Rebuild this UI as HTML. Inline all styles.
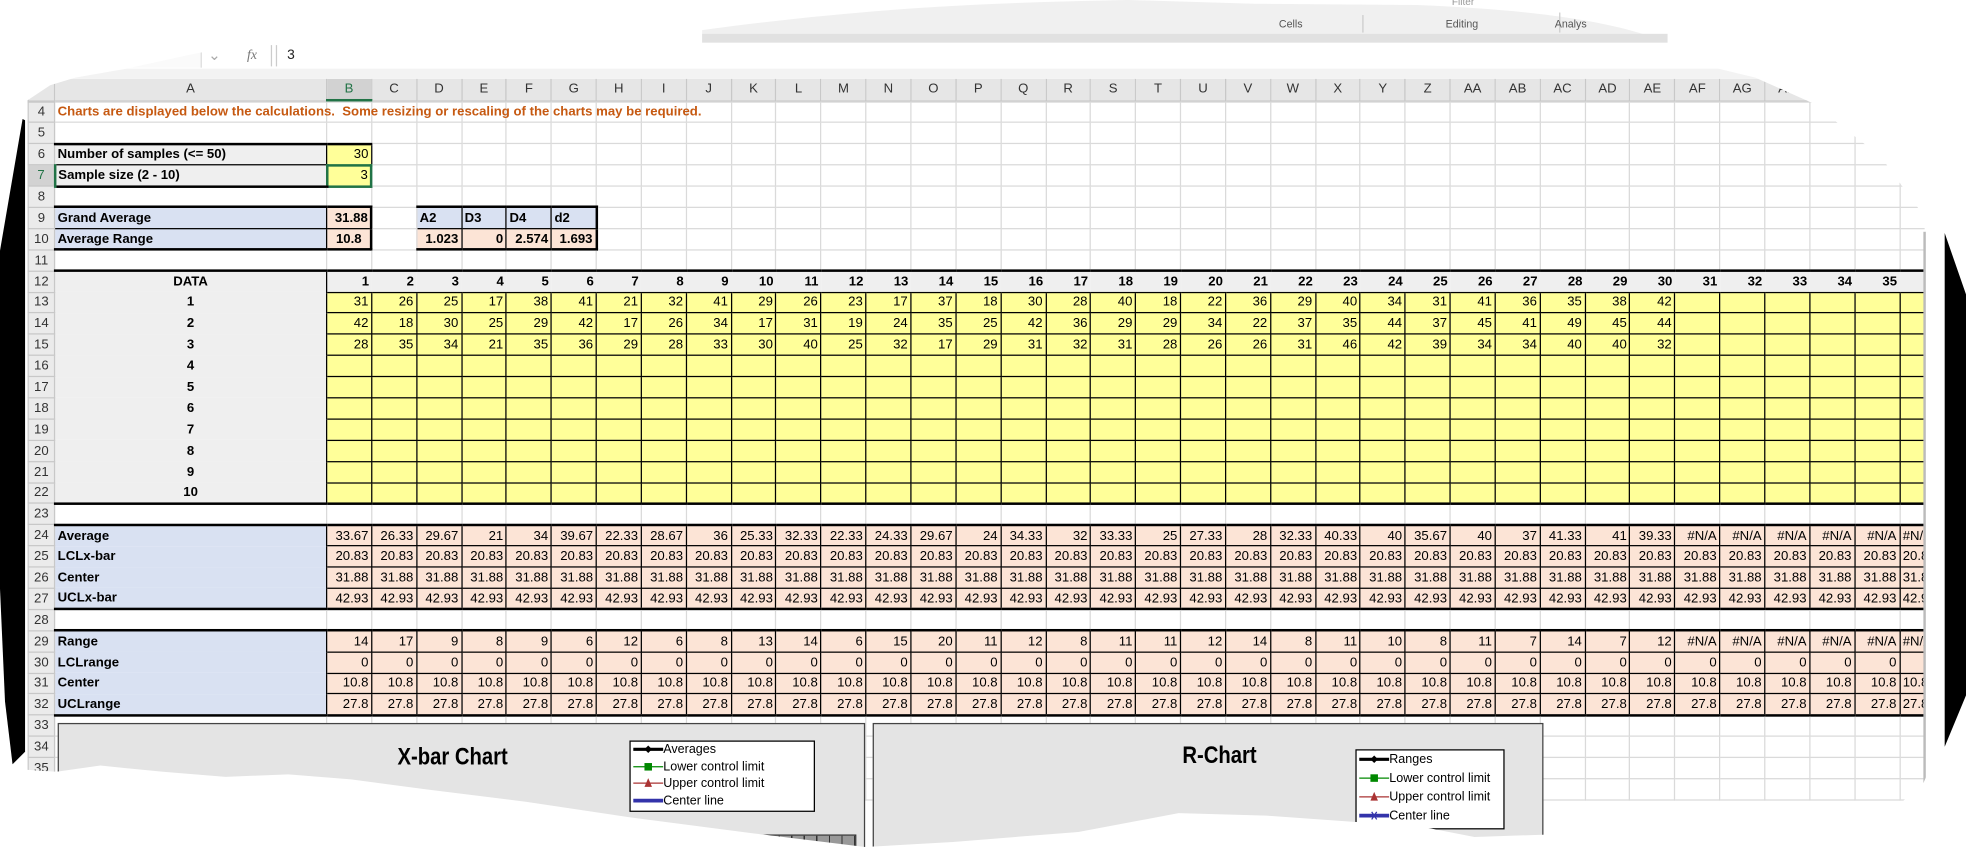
<!DOCTYPE html>
<html><head><meta charset="utf-8">
<style>
html,body{margin:0;padding:0;background:#fff;overflow:hidden}
body{width:1966px;height:852px;position:relative}
#st{position:absolute;left:0;top:0;width:1568px;height:680px;transform:scale(1.25383,1.25294);transform-origin:0 0;overflow:hidden;background:#fff;font-family:"Liberation Sans",sans-serif}
#sheet{position:absolute;left:0;top:0;width:1535px;height:680px;overflow:hidden}
table{position:absolute;left:22px;width:1528.6px;border-collapse:collapse;table-layout:fixed;font-size:10.5px;color:#000}
#ch{top:63px}
#ch td{height:16px;background:#e6e6e6;border:1px solid #c8c8c8;border-top:none;text-align:center;color:#333;font-size:10.5px;padding:0;overflow:hidden}
#ch td.sel{background:#d2d2d2;color:#217346;border-bottom:2px solid #217346}
#t{top:80.5px}
#t tr{height:16.9px}
#t td{border:1px solid #dadada;padding:0 2px;white-space:nowrap;text-align:right;line-height:14px;overflow:visible}
#t td.h{background:#ebebeb;border-color:#c8c8c8;color:#333;text-align:center;padding:0;font-size:10.5px}
#t td.hs{background:#d2d2d2;color:#217346;border-right:2px solid #217346}
#t td.o{color:#c65911;font-weight:bold;text-align:left}
#t td.g{background:#efefef;border-color:#000;font-weight:bold}
#t td.gl{text-align:left}
#t td.c{text-align:center}
#t td.y{background:#ffff99;border-color:#000}
#t td.p{background:#fce4d6;border-color:#000}
#t td.bl{background:#d9e1f2;border-color:#000;font-weight:bold;text-align:left}
#t td.b{font-weight:bold}
#t td.A{border-top:none;border-bottom:none}
#t td.gh{background:#efefef;border-left:none;border-right:none;border-bottom:1px solid #000;font-weight:bold}
#t tr.tt td:not(.h){border-top:2px solid #000}
#t tr.bb td:not(.h){border-bottom:2px solid #000}
#t td.T{border-top:2px solid #000}
#t td.B{border-bottom:2px solid #000}
#t td.R{border-right:2px solid #000}
#t td.sel{border:2px solid #217346}
.chart{position:absolute;background:#e4e4e4;border:1px solid #444}
.ctit{position:absolute;font-weight:bold;font-size:19px;white-space:nowrap;transform:scaleX(.85);transform-origin:0 0}
.leg{position:absolute;background:#fff;border:1px solid #000;font-size:10px}
.li{position:absolute;left:2px;white-space:nowrap;height:12px;line-height:12px}
.li svg{vertical-align:middle}
</style></head><body>
<div id="st">
<div id="sheet">
<div style="position:absolute;left:0;top:34px;width:1568px;height:21px;background:#fff;border-bottom:1px solid #d4d4d4"></div>
<div style="position:absolute;left:40px;top:34px;width:120px;height:20px;background:#fafafa;border-right:1px solid #ddd"></div>
<div style="position:absolute;left:166px;top:37px;font-size:12px;color:#aaa">&#8964;</div>
<div style="position:absolute;left:197px;top:38px;font-size:11px;color:#777;font-family:'Liberation Serif',serif;font-style:italic">fx</div>
<div style="position:absolute;left:216px;top:36px;width:1px;height:17px;background:#ccc"></div>
<div style="position:absolute;left:220px;top:36px;width:1px;height:17px;background:#ccc"></div>
<div style="position:absolute;left:229px;top:38px;font-size:11px;color:#222">3</div>
<div style="position:absolute;left:0;top:55px;width:1568px;height:8px;background:#f3f3f3"></div>
<table id="ch"><colgroup><col style="width:21px"><col style="width:217px"><col span="36" style="width:35.85px"></colgroup>
<tr><td style="background:#e6e6e6"><td>A<td class="sel">B<td>C<td>D<td>E<td>F<td>G<td>H<td>I<td>J<td>K<td>L<td>M<td>N<td>O<td>P<td>Q<td>R<td>S<td>T<td>U<td>V<td>W<td>X<td>Y<td>Z<td>AA<td>AB<td>AC<td>AD<td>AE<td>AF<td>AG<td>AH<td>AI<td>AJ<td>AK</tr></table>
<table id="t"><colgroup><col style="width:21px"><col style="width:217px"><col span="36" style="width:35.85px"></colgroup>
<tr><td class=h>4<td class=o>Charts are displayed below the calculations.&nbsp; Some resizing or rescaling of the charts may be required.<td><td><td><td><td><td><td><td><td><td><td><td><td><td><td><td><td><td><td><td><td><td><td><td><td><td><td><td><td><td><td><td><td><td><td><td><td></tr>
<tr><td class=h>5<td><td><td><td><td><td><td><td><td><td><td><td><td><td><td><td><td><td><td><td><td><td><td><td><td><td><td><td><td><td><td><td><td><td><td><td><td><td></tr>
<tr><td class=h>6<td class="g gl T">Number of samples (&lt;= 50)<td class="y T">30<td><td><td><td><td><td><td><td><td><td><td><td><td><td><td><td><td><td><td><td><td><td><td><td><td><td><td><td><td><td><td><td><td><td><td></tr>
<tr><td class="h hs">7<td class="g gl B">Sample size (2 - 10)<td class="y sel">3<td><td><td><td><td><td><td><td><td><td><td><td><td><td><td><td><td><td><td><td><td><td><td><td><td><td><td><td><td><td><td><td><td><td><td></tr>
<tr><td class=h>8<td><td><td><td><td><td><td><td><td><td><td><td><td><td><td><td><td><td><td><td><td><td><td><td><td><td><td><td><td><td><td><td><td><td><td><td><td><td></tr>
<tr><td class=h>9<td class="bl T">Grand Average<td class="p b T R">31.88<td><td class="bl T">A2<td class="bl T">D3<td class="bl T">D4<td class="bl T R">d2<td><td><td><td><td><td><td><td><td><td><td><td><td><td><td><td><td><td><td><td><td><td><td><td><td><td><td><td><td><td></tr>
<tr><td class=h>10<td class="bl B">Average Range<td class="p b c B R">10.8<td><td class="p b B">1.023<td class="p b B">0<td class="p b B">2.574<td class="p b B R">1.693<td><td><td><td><td><td><td><td><td><td><td><td><td><td><td><td><td><td><td><td><td><td><td><td><td><td><td><td><td><td></tr>
<tr><td class=h>11<td><td><td><td><td><td><td><td><td><td><td><td><td><td><td><td><td><td><td><td><td><td><td><td><td><td><td><td><td><td><td><td><td><td><td><td><td><td></tr>
<tr class=tt><td class=h>12<td class="g c A">DATA<td class=gh>1<td class=gh>2<td class=gh>3<td class=gh>4<td class=gh>5<td class=gh>6<td class=gh>7<td class=gh>8<td class=gh>9<td class=gh>10<td class=gh>11<td class=gh>12<td class=gh>13<td class=gh>14<td class=gh>15<td class=gh>16<td class=gh>17<td class=gh>18<td class=gh>19<td class=gh>20<td class=gh>21<td class=gh>22<td class=gh>23<td class=gh>24<td class=gh>25<td class=gh>26<td class=gh>27<td class=gh>28<td class=gh>29<td class=gh>30<td class=gh>31<td class=gh>32<td class=gh>33<td class=gh>34<td class=gh>35<td class=gh></tr>
<tr><td class=h>13<td class="g c A">1<td class=y>31<td class=y>26<td class=y>25<td class=y>17<td class=y>38<td class=y>41<td class=y>21<td class=y>32<td class=y>41<td class=y>29<td class=y>26<td class=y>23<td class=y>17<td class=y>37<td class=y>18<td class=y>30<td class=y>28<td class=y>40<td class=y>18<td class=y>22<td class=y>36<td class=y>29<td class=y>40<td class=y>34<td class=y>31<td class=y>41<td class=y>36<td class=y>35<td class=y>38<td class=y>42<td class=y><td class=y><td class=y><td class=y><td class=y><td class=y></tr>
<tr><td class=h>14<td class="g c A">2<td class=y>42<td class=y>18<td class=y>30<td class=y>25<td class=y>29<td class=y>42<td class=y>17<td class=y>26<td class=y>34<td class=y>17<td class=y>31<td class=y>19<td class=y>24<td class=y>35<td class=y>25<td class=y>42<td class=y>36<td class=y>29<td class=y>29<td class=y>34<td class=y>22<td class=y>37<td class=y>35<td class=y>44<td class=y>37<td class=y>45<td class=y>41<td class=y>49<td class=y>45<td class=y>44<td class=y><td class=y><td class=y><td class=y><td class=y><td class=y></tr>
<tr><td class=h>15<td class="g c A">3<td class=y>28<td class=y>35<td class=y>34<td class=y>21<td class=y>35<td class=y>36<td class=y>29<td class=y>28<td class=y>33<td class=y>30<td class=y>40<td class=y>25<td class=y>32<td class=y>17<td class=y>29<td class=y>31<td class=y>32<td class=y>31<td class=y>28<td class=y>26<td class=y>26<td class=y>31<td class=y>46<td class=y>42<td class=y>39<td class=y>34<td class=y>34<td class=y>40<td class=y>40<td class=y>32<td class=y><td class=y><td class=y><td class=y><td class=y><td class=y></tr>
<tr><td class=h>16<td class="g c A">4<td class=y><td class=y><td class=y><td class=y><td class=y><td class=y><td class=y><td class=y><td class=y><td class=y><td class=y><td class=y><td class=y><td class=y><td class=y><td class=y><td class=y><td class=y><td class=y><td class=y><td class=y><td class=y><td class=y><td class=y><td class=y><td class=y><td class=y><td class=y><td class=y><td class=y><td class=y><td class=y><td class=y><td class=y><td class=y><td class=y></tr>
<tr><td class=h>17<td class="g c A">5<td class=y><td class=y><td class=y><td class=y><td class=y><td class=y><td class=y><td class=y><td class=y><td class=y><td class=y><td class=y><td class=y><td class=y><td class=y><td class=y><td class=y><td class=y><td class=y><td class=y><td class=y><td class=y><td class=y><td class=y><td class=y><td class=y><td class=y><td class=y><td class=y><td class=y><td class=y><td class=y><td class=y><td class=y><td class=y><td class=y></tr>
<tr><td class=h>18<td class="g c A">6<td class=y><td class=y><td class=y><td class=y><td class=y><td class=y><td class=y><td class=y><td class=y><td class=y><td class=y><td class=y><td class=y><td class=y><td class=y><td class=y><td class=y><td class=y><td class=y><td class=y><td class=y><td class=y><td class=y><td class=y><td class=y><td class=y><td class=y><td class=y><td class=y><td class=y><td class=y><td class=y><td class=y><td class=y><td class=y><td class=y></tr>
<tr><td class=h>19<td class="g c A">7<td class=y><td class=y><td class=y><td class=y><td class=y><td class=y><td class=y><td class=y><td class=y><td class=y><td class=y><td class=y><td class=y><td class=y><td class=y><td class=y><td class=y><td class=y><td class=y><td class=y><td class=y><td class=y><td class=y><td class=y><td class=y><td class=y><td class=y><td class=y><td class=y><td class=y><td class=y><td class=y><td class=y><td class=y><td class=y><td class=y></tr>
<tr><td class=h>20<td class="g c A">8<td class=y><td class=y><td class=y><td class=y><td class=y><td class=y><td class=y><td class=y><td class=y><td class=y><td class=y><td class=y><td class=y><td class=y><td class=y><td class=y><td class=y><td class=y><td class=y><td class=y><td class=y><td class=y><td class=y><td class=y><td class=y><td class=y><td class=y><td class=y><td class=y><td class=y><td class=y><td class=y><td class=y><td class=y><td class=y><td class=y></tr>
<tr><td class=h>21<td class="g c A">9<td class=y><td class=y><td class=y><td class=y><td class=y><td class=y><td class=y><td class=y><td class=y><td class=y><td class=y><td class=y><td class=y><td class=y><td class=y><td class=y><td class=y><td class=y><td class=y><td class=y><td class=y><td class=y><td class=y><td class=y><td class=y><td class=y><td class=y><td class=y><td class=y><td class=y><td class=y><td class=y><td class=y><td class=y><td class=y><td class=y></tr>
<tr class=bb><td class=h>22<td class="g c A">10<td class=y><td class=y><td class=y><td class=y><td class=y><td class=y><td class=y><td class=y><td class=y><td class=y><td class=y><td class=y><td class=y><td class=y><td class=y><td class=y><td class=y><td class=y><td class=y><td class=y><td class=y><td class=y><td class=y><td class=y><td class=y><td class=y><td class=y><td class=y><td class=y><td class=y><td class=y><td class=y><td class=y><td class=y><td class=y><td class=y></tr>
<tr><td class=h>23<td><td><td><td><td><td><td><td><td><td><td><td><td><td><td><td><td><td><td><td><td><td><td><td><td><td><td><td><td><td><td><td><td><td><td><td><td><td></tr>
<tr class=tt><td class=h>24<td class="bl A">Average<td class=p>33.67<td class=p>26.33<td class=p>29.67<td class=p>21<td class=p>34<td class=p>39.67<td class=p>22.33<td class=p>28.67<td class=p>36<td class=p>25.33<td class=p>32.33<td class=p>22.33<td class=p>24.33<td class=p>29.67<td class=p>24<td class=p>34.33<td class=p>32<td class=p>33.33<td class=p>25<td class=p>27.33<td class=p>28<td class=p>32.33<td class=p>40.33<td class=p>40<td class=p>35.67<td class=p>40<td class=p>37<td class=p>41.33<td class=p>41<td class=p>39.33<td class=p>#N/A<td class=p>#N/A<td class=p>#N/A<td class=p>#N/A<td class=p>#N/A<td class=p style="text-align:left">#N/A</tr>
<tr><td class=h>25<td class="bl A">LCLx-bar<td class=p>20.83<td class=p>20.83<td class=p>20.83<td class=p>20.83<td class=p>20.83<td class=p>20.83<td class=p>20.83<td class=p>20.83<td class=p>20.83<td class=p>20.83<td class=p>20.83<td class=p>20.83<td class=p>20.83<td class=p>20.83<td class=p>20.83<td class=p>20.83<td class=p>20.83<td class=p>20.83<td class=p>20.83<td class=p>20.83<td class=p>20.83<td class=p>20.83<td class=p>20.83<td class=p>20.83<td class=p>20.83<td class=p>20.83<td class=p>20.83<td class=p>20.83<td class=p>20.83<td class=p>20.83<td class=p>20.83<td class=p>20.83<td class=p>20.83<td class=p>20.83<td class=p>20.83<td class=p style="text-align:left">20.83</tr>
<tr><td class=h>26<td class="bl A">Center<td class=p>31.88<td class=p>31.88<td class=p>31.88<td class=p>31.88<td class=p>31.88<td class=p>31.88<td class=p>31.88<td class=p>31.88<td class=p>31.88<td class=p>31.88<td class=p>31.88<td class=p>31.88<td class=p>31.88<td class=p>31.88<td class=p>31.88<td class=p>31.88<td class=p>31.88<td class=p>31.88<td class=p>31.88<td class=p>31.88<td class=p>31.88<td class=p>31.88<td class=p>31.88<td class=p>31.88<td class=p>31.88<td class=p>31.88<td class=p>31.88<td class=p>31.88<td class=p>31.88<td class=p>31.88<td class=p>31.88<td class=p>31.88<td class=p>31.88<td class=p>31.88<td class=p>31.88<td class=p style="text-align:left">31.88</tr>
<tr class=bb><td class=h>27<td class="bl A">UCLx-bar<td class=p>42.93<td class=p>42.93<td class=p>42.93<td class=p>42.93<td class=p>42.93<td class=p>42.93<td class=p>42.93<td class=p>42.93<td class=p>42.93<td class=p>42.93<td class=p>42.93<td class=p>42.93<td class=p>42.93<td class=p>42.93<td class=p>42.93<td class=p>42.93<td class=p>42.93<td class=p>42.93<td class=p>42.93<td class=p>42.93<td class=p>42.93<td class=p>42.93<td class=p>42.93<td class=p>42.93<td class=p>42.93<td class=p>42.93<td class=p>42.93<td class=p>42.93<td class=p>42.93<td class=p>42.93<td class=p>42.93<td class=p>42.93<td class=p>42.93<td class=p>42.93<td class=p>42.93<td class=p style="text-align:left">42.93</tr>
<tr><td class=h>28<td><td><td><td><td><td><td><td><td><td><td><td><td><td><td><td><td><td><td><td><td><td><td><td><td><td><td><td><td><td><td><td><td><td><td><td><td><td></tr>
<tr class=tt><td class=h>29<td class="bl A">Range<td class=p>14<td class=p>17<td class=p>9<td class=p>8<td class=p>9<td class=p>6<td class=p>12<td class=p>6<td class=p>8<td class=p>13<td class=p>14<td class=p>6<td class=p>15<td class=p>20<td class=p>11<td class=p>12<td class=p>8<td class=p>11<td class=p>11<td class=p>12<td class=p>14<td class=p>8<td class=p>11<td class=p>10<td class=p>8<td class=p>11<td class=p>7<td class=p>14<td class=p>7<td class=p>12<td class=p>#N/A<td class=p>#N/A<td class=p>#N/A<td class=p>#N/A<td class=p>#N/A<td class=p style="text-align:left">#N/A</tr>
<tr><td class=h>30<td class="bl A">LCLrange<td class=p>0<td class=p>0<td class=p>0<td class=p>0<td class=p>0<td class=p>0<td class=p>0<td class=p>0<td class=p>0<td class=p>0<td class=p>0<td class=p>0<td class=p>0<td class=p>0<td class=p>0<td class=p>0<td class=p>0<td class=p>0<td class=p>0<td class=p>0<td class=p>0<td class=p>0<td class=p>0<td class=p>0<td class=p>0<td class=p>0<td class=p>0<td class=p>0<td class=p>0<td class=p>0<td class=p>0<td class=p>0<td class=p>0<td class=p>0<td class=p>0<td class=p>0</tr>
<tr><td class=h>31<td class="bl A">Center<td class=p>10.8<td class=p>10.8<td class=p>10.8<td class=p>10.8<td class=p>10.8<td class=p>10.8<td class=p>10.8<td class=p>10.8<td class=p>10.8<td class=p>10.8<td class=p>10.8<td class=p>10.8<td class=p>10.8<td class=p>10.8<td class=p>10.8<td class=p>10.8<td class=p>10.8<td class=p>10.8<td class=p>10.8<td class=p>10.8<td class=p>10.8<td class=p>10.8<td class=p>10.8<td class=p>10.8<td class=p>10.8<td class=p>10.8<td class=p>10.8<td class=p>10.8<td class=p>10.8<td class=p>10.8<td class=p>10.8<td class=p>10.8<td class=p>10.8<td class=p>10.8<td class=p>10.8<td class=p style="text-align:left">10.8</tr>
<tr class=bb><td class=h>32<td class="bl A">UCLrange<td class=p>27.8<td class=p>27.8<td class=p>27.8<td class=p>27.8<td class=p>27.8<td class=p>27.8<td class=p>27.8<td class=p>27.8<td class=p>27.8<td class=p>27.8<td class=p>27.8<td class=p>27.8<td class=p>27.8<td class=p>27.8<td class=p>27.8<td class=p>27.8<td class=p>27.8<td class=p>27.8<td class=p>27.8<td class=p>27.8<td class=p>27.8<td class=p>27.8<td class=p>27.8<td class=p>27.8<td class=p>27.8<td class=p>27.8<td class=p>27.8<td class=p>27.8<td class=p>27.8<td class=p>27.8<td class=p>27.8<td class=p>27.8<td class=p>27.8<td class=p>27.8<td class=p>27.8<td class=p style="text-align:left">27.8</tr>
<tr><td class=h>33<td><td><td><td><td><td><td><td><td><td><td><td><td><td><td><td><td><td><td><td><td><td><td><td><td><td><td><td><td><td><td><td><td><td><td><td><td><td></tr>
<tr><td class=h>34<td><td><td><td><td><td><td><td><td><td><td><td><td><td><td><td><td><td><td><td><td><td><td><td><td><td><td><td><td><td><td><td><td><td><td><td><td><td></tr>
<tr><td class=h>35<td><td><td><td><td><td><td><td><td><td><td><td><td><td><td><td><td><td><td><td><td><td><td><td><td><td><td><td><td><td><td><td><td><td><td><td><td><td></tr>
<tr><td class=h>36<td><td><td><td><td><td><td><td><td><td><td><td><td><td><td><td><td><td><td><td><td><td><td><td><td><td><td><td><td><td><td><td><td><td><td><td><td><td></tr>
</table>

<div class="chart" style="left:46px;top:577px;width:642px;height:110px">
  <div class="ctit" style="left:270px;top:16px">X-bar Chart</div>
  <div class="leg" style="left:455px;top:13px;width:146px;height:55px">
    <div class="li" style="top:1px"><svg width="24" height="10"><line x1="0" y1="5" x2="24" y2="5" stroke="#000" stroke-width="2.5"/><path d="M12 2 L15 5 L12 8 L9 5Z" fill="#000"/></svg>Averages</div>
    <div class="li" style="top:15px"><svg width="24" height="10"><line x1="0" y1="5" x2="24" y2="5" stroke="#080" stroke-width="1"/><rect x="9" y="2" width="6" height="6" fill="#080"/></svg>Lower control limit</div>
    <div class="li" style="top:28px"><svg width="24" height="10"><line x1="0" y1="5" x2="24" y2="5" stroke="#a33" stroke-width="1"/><path d="M12 1 L15 8 L9 8Z" fill="#a33"/></svg>Upper control limit</div>
    <div class="li" style="top:42px"><svg width="24" height="10"><line x1="0" y1="5" x2="24" y2="5" stroke="#33a" stroke-width="3"/></svg>Center line</div>
  </div>
  <div style="position:absolute;left:494px;top:88px;width:140px;height:20px;background:repeating-linear-gradient(90deg,#999 0 9px,#333 9px 10px);border:1px solid #333"></div>
</div>
<div class="chart" style="left:696px;top:577px;width:533px;height:110px">
  <div class="ctit" style="left:246px;top:15px">R-Chart</div>
  <div class="leg" style="left:384px;top:20px;width:117px;height:62px">
    <div class="li" style="top:2px"><svg width="24" height="10"><line x1="0" y1="5" x2="24" y2="5" stroke="#000" stroke-width="2.5"/><path d="M12 2 L15 5 L12 8 L9 5Z" fill="#000"/></svg>Ranges</div>
    <div class="li" style="top:17px"><svg width="24" height="10"><line x1="0" y1="5" x2="24" y2="5" stroke="#080" stroke-width="1"/><rect x="9" y="2" width="6" height="6" fill="#080"/></svg>Lower control limit</div>
    <div class="li" style="top:32px"><svg width="24" height="10"><line x1="0" y1="5" x2="24" y2="5" stroke="#a33" stroke-width="1"/><path d="M12 1 L15 8 L9 8Z" fill="#a33"/></svg>Upper control limit</div>
    <div class="li" style="top:47px"><svg width="24" height="10"><line x1="0" y1="5" x2="24" y2="5" stroke="#33a" stroke-width="3"/><path d="M10 2 L14 8 M14 2 L10 8" stroke="#33a"/></svg>Center line</div>
  </div>
</div>
</div>
<div style="position:absolute;left:1534px;top:185px;width:2px;height:440px;background:#bbb"></div>

<svg width="1568" height="680" style="position:absolute;left:0;top:0" xmlns="http://www.w3.org/2000/svg">
  <path d="M0 0 H1568 V200 L1540 180 L1500 125 L1445 82 L1400 62 L1330 45 L1330 36 L1000 33 L700 33 L400 33 L240 30 L190 36 L150 44 L100 55 L60 62 L40 68 L22 80 L0 90 Z" fill="#fff"/>
  <path d="M560 24 C700 5 800 2 900 0 L1000 3 L1130 4 C1230 8 1290 18 1330 34 L560 34 Z" fill="#f0f0f0"/>
  <rect x="560" y="27" width="770" height="7" fill="#e1e1e1"/>
  <line x1="1087" y1="12" x2="1087" y2="26" stroke="#ccc"/>
  <line x1="1244" y1="10" x2="1244" y2="26" stroke="#ccc"/>
  <text x="1020" y="22" font-family="Liberation Sans" font-size="8.5" fill="#555">Cells</text>
  <text x="1153" y="22" font-family="Liberation Sans" font-size="8.5" fill="#555">Editing</text>
  <text x="1240" y="22" font-family="Liberation Sans" font-size="8.5" fill="#555">Analys</text>
  <text x="1158" y="4" font-family="Liberation Sans" font-size="8" fill="#999">Filter</text>
  <path d="M0 90 L20 92 L20 612 L0 612 Z" fill="#fff"/>
  <path d="M18 95 L20 96 L20 600 L10 610 L4 560 L0 470 L0 200 Z" fill="#000"/>
  <path d="M0 613 L45 616 L80 611 L130 616 L180 620 L230 618 L280 622 L340 630 L420 640 L500 652 L600 665 L690 676 L760 672 L860 664 L940 649 L1010 651 L1080 656 L1130 659 L1176 668 L1236 666 L1300 668 L1404 667 L1470 655 L1517 640 L1534 625 L1545 600 L1568 560 L1568 680 L0 680 Z" fill="#fff"/>
  <path d="M1536 185 L1551 186 L1551 600 L1536 625 Z" fill="#fff"/>
  <path d="M1551 186 L1568 235 L1568 555 L1551 596 Z" fill="#000"/>
</svg>
</div>
</body></html>
